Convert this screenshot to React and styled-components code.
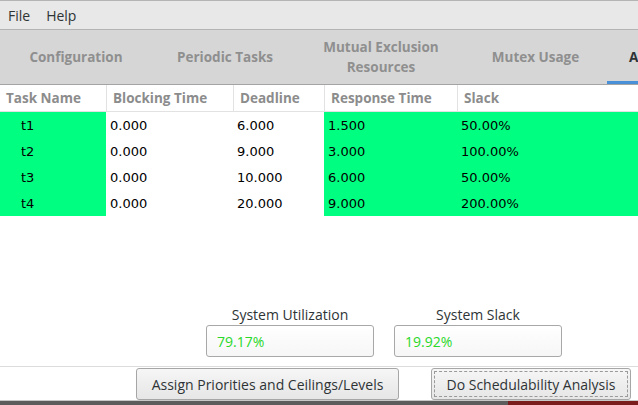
import React from "react";
import styled, { createGlobalStyle } from "styled-components";

const uiFont = `"Open Sans", "Noto Sans", sans-serif`;
const cellFont = `"DejaVu Sans", sans-serif`;
const rowGreen = "#00ff80";

const GlobalStyle = createGlobalStyle`
  html, body {
    margin: 0;
    padding: 0;
    background: #ffffff;
    overflow: hidden;
  }
`;

const Window = styled.div`
  width: 638px;
  height: 405px;
  display: flex;
  flex-direction: column;
  background: #ffffff;
  font-family: ${uiFont};
  overflow: hidden;
`;

const MenuBar = styled.div`
  height: 28px;
  display: flex;
  align-items: center;
  gap: 16px;
  padding: 0 8px;
  background: #e8e8e8;
  border-top: 1px solid #b4b4b4;
  border-bottom: 1px solid #b4b4b4;
  font-size: 14px;
  color: #2e3436;
`;

const MenuItem = styled.span``;

const TabBar = styled.div`
  height: 54px;
  display: flex;
  background: #d6d6d6;
  border-bottom: 1px solid #a4a4a4;
  overflow: hidden;
`;

const Tab = styled.div`
  flex: 0 0 ${p => p.width}px;
  display: flex;
  align-items: center;
  justify-content: ${p => (p.active ? "flex-start" : "center")};
  padding-left: ${p => (p.active ? "22px" : "0")};
  box-sizing: border-box;
  text-align: center;
  font-size: 13.5px;
  font-weight: 700;
  line-height: 20px;
  white-space: nowrap;
  color: ${p => (p.active ? "#2e3436" : "#8f8f8f")};
  border-bottom: 3px solid ${p => (p.active ? "#4a90d9" : "transparent")};
  padding-top: 3px;
`;

const Grid = styled.div`
  display: grid;
  grid-template-columns: 106px 127px 91px 133px 1fr;
`;

const HeadCell = styled.div`
  height: 26px;
  display: flex;
  align-items: center;
  padding-left: 6px;
  font-size: 13.5px;
  font-weight: 700;
  color: #8c8c8c;
  border-bottom: 1px solid #e2e2e2;
  border-left: ${p => (p.first ? "none" : "1px solid #e2e2e2")};
`;

const Cell = styled.div`
  height: 26px;
  display: flex;
  align-items: center;
  padding-left: ${p => (p.indent ? "21px" : "4px")};
  font-family: ${cellFont};
  font-size: 13px;
  color: #000000;
  background: ${p => (p.hot ? rowGreen : "transparent")};
`;

const Spacer = styled.div`
  flex: 1;
`;

const StatsRow = styled.div`
  display: flex;
  justify-content: flex-start;
  gap: 20px;
  padding-left: 206px;
  padding-bottom: 9px;
`;

const Stat = styled.div`
  width: 168px;
  display: flex;
  flex-direction: column;
  align-items: center;
  gap: 2px;
`;

const StatLabel = styled.div`
  font-size: 14px;
  color: #2e3436;
  line-height: 17px;
`;

const StatField = styled.div`
  width: 100%;
  height: 32px;
  box-sizing: border-box;
  display: flex;
  align-items: center;
  padding-left: 10px;
  border: 1px solid #a8a8a8;
  border-radius: 3px;
  background: linear-gradient(#ffffff, #f6f6f6);
  font-size: 14px;
  color: #29d829;
`;

const ActionBar = styled.div`
  height: 34px;
  display: flex;
  align-items: flex-start;
  padding-top: 1px;
  border-top: 1px solid #dcdcdc;
  box-sizing: border-box;
`;

const Button = styled.button`
  height: 32px;
  width: ${p => p.width}px;
  margin-left: ${p => p.offset}px;
  box-sizing: border-box;
  border: 1px solid #a6a6a6;
  border-radius: 3px;
  background: linear-gradient(#f6f6f6, #e6e6e6);
  font-family: ${uiFont};
  font-size: 14px;
  color: #2e3436;
  padding: 0;
  outline: ${p => (p.focused ? "1px dashed #9a9a9a" : "none")};
  outline-offset: -4px;
`;

const DesktopEdge = styled.div`
  height: 4px;
  background: linear-gradient(to right, #5c5c5c 0, #5c5c5c 508px, #7a1c1c 508px);
  border-top: 1px solid #c8c8c8;
`;

const tabs = [
  { label: "Configuration", width: 152 },
  { label: "Periodic Tasks", width: 146 },
  { label: ["Mutual Exclusion", "Resources"], width: 166 },
  { label: "Mutex Usage", width: 143 },
  { label: "Analysis", width: 120, active: true },
];

const columns = ["Task Name", "Blocking Time", "Deadline", "Response Time", "Slack"];

const rows = [
  ["t1", "0.000", "6.000", "1.500", "50.00%"],
  ["t2", "0.000", "9.000", "3.000", "100.00%"],
  ["t3", "0.000", "10.000", "6.000", "50.00%"],
  ["t4", "0.000", "20.000", "9.000", "200.00%"],
];

const greenCols = [0, 3, 4];

const App = () => {
  return (
    <Window>
      <GlobalStyle />
      <MenuBar>
        <MenuItem>File</MenuItem>
        <MenuItem>Help</MenuItem>
      </MenuBar>

      <TabBar>
        {tabs.map((t, i) => (
          <Tab key={i} width={t.width} active={t.active}>
            {Array.isArray(t.label) ? (
              <span>
                {t.label[0]}
                <br />
                {t.label[1]}
              </span>
            ) : (
              t.label
            )}
          </Tab>
        ))}
      </TabBar>

      <Grid>
        {columns.map((c, i) => (
          <HeadCell key={c} first={i === 0}>
            {c}
          </HeadCell>
        ))}
        {rows.map(r =>
          r.map((v, i) => (
            <Cell key={r[0] + i} hot={greenCols.includes(i)} indent={i === 0}>
              {v}
            </Cell>
          ))
        )}
      </Grid>

      <Spacer />

      <StatsRow>
        <Stat>
          <StatLabel>System Utilization</StatLabel>
          <StatField>79.17%</StatField>
        </Stat>
        <Stat>
          <StatLabel>System Slack</StatLabel>
          <StatField>19.92%</StatField>
        </Stat>
      </StatsRow>

      <ActionBar>
        <Button width={263} offset={136}>
          Assign Priorities and Ceilings/Levels
        </Button>
        <Button width={200} offset={32} focused>
          Do Schedulability Analysis
        </Button>
      </ActionBar>

      <DesktopEdge />
    </Window>
  );
};

export default App;
